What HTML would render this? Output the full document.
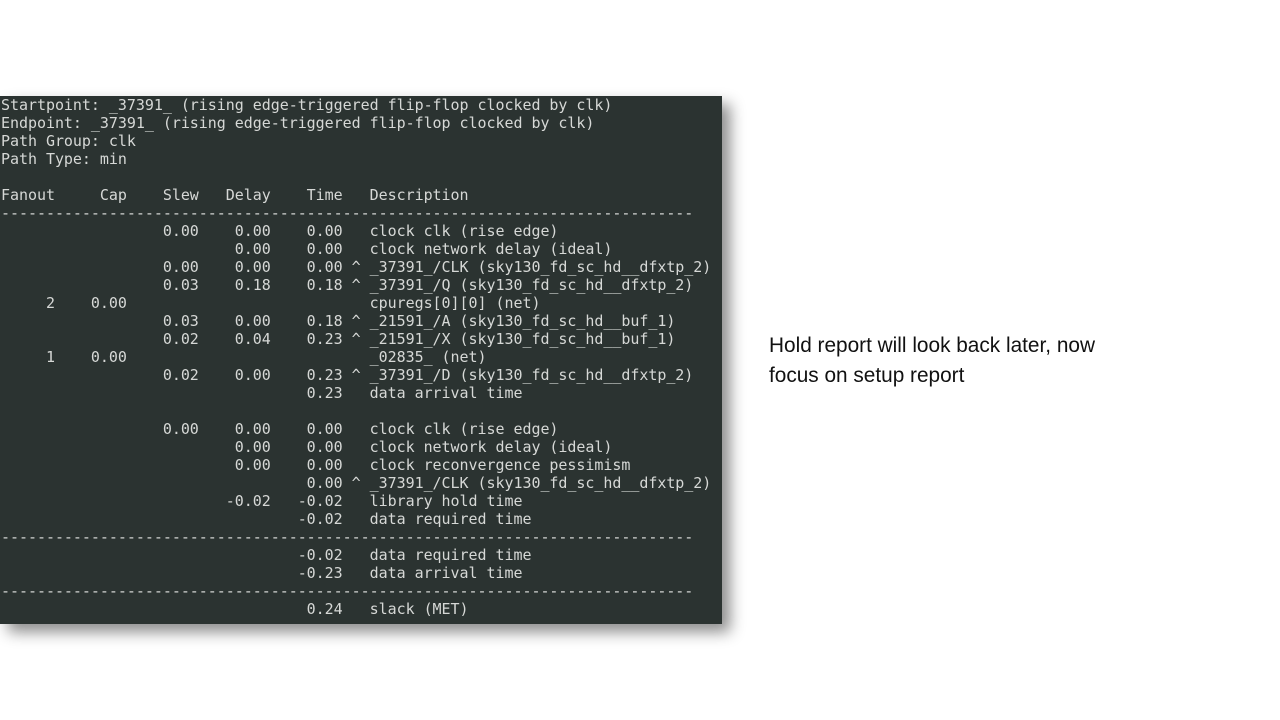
<!DOCTYPE html>
<html><head><meta charset="utf-8"><style>
html,body{margin:0;padding:0;background:#fff;width:1280px;height:720px;overflow:hidden;position:relative}
.term{position:absolute;left:0;top:96px;width:722px;height:528px;background:#2b3331;box-shadow:8px 8px 14px rgba(0,0,0,0.45)}
pre{margin:0;position:absolute;left:1px;top:0px;font-family:"DejaVu Sans Mono","Liberation Mono",monospace;font-size:15px;letter-spacing:-0.04px;line-height:18px;color:#d6d8d6;white-space:pre}
.note{position:absolute;left:769px;top:331px;font-family:"Liberation Sans",sans-serif;font-size:20.8px;line-height:29.5px;color:#111}
</style></head><body>
<div class="term"><pre>Startpoint: _37391_ (rising edge-triggered flip-flop clocked by clk)
Endpoint: _37391_ (rising edge-triggered flip-flop clocked by clk)
Path Group: clk
Path Type: min

Fanout     Cap    Slew   Delay    Time   Description
-----------------------------------------------------------------------------
                  0.00    0.00    0.00   clock clk (rise edge)
                          0.00    0.00   clock network delay (ideal)
                  0.00    0.00    0.00 ^ _37391_/CLK (sky130_fd_sc_hd__dfxtp_2)
                  0.03    0.18    0.18 ^ _37391_/Q (sky130_fd_sc_hd__dfxtp_2)
     2    0.00                           cpuregs[0][0] (net)
                  0.03    0.00    0.18 ^ _21591_/A (sky130_fd_sc_hd__buf_1)
                  0.02    0.04    0.23 ^ _21591_/X (sky130_fd_sc_hd__buf_1)
     1    0.00                           _02835_ (net)
                  0.02    0.00    0.23 ^ _37391_/D (sky130_fd_sc_hd__dfxtp_2)
                                  0.23   data arrival time

                  0.00    0.00    0.00   clock clk (rise edge)
                          0.00    0.00   clock network delay (ideal)
                          0.00    0.00   clock reconvergence pessimism
                                  0.00 ^ _37391_/CLK (sky130_fd_sc_hd__dfxtp_2)
                         -0.02   -0.02   library hold time
                                 -0.02   data required time
-----------------------------------------------------------------------------
                                 -0.02   data required time
                                 -0.23   data arrival time
-----------------------------------------------------------------------------
                                  0.24   slack (MET)</pre></div>
<div class="note">Hold report will look back later, now<br>focus on setup report</div>
</body></html>
